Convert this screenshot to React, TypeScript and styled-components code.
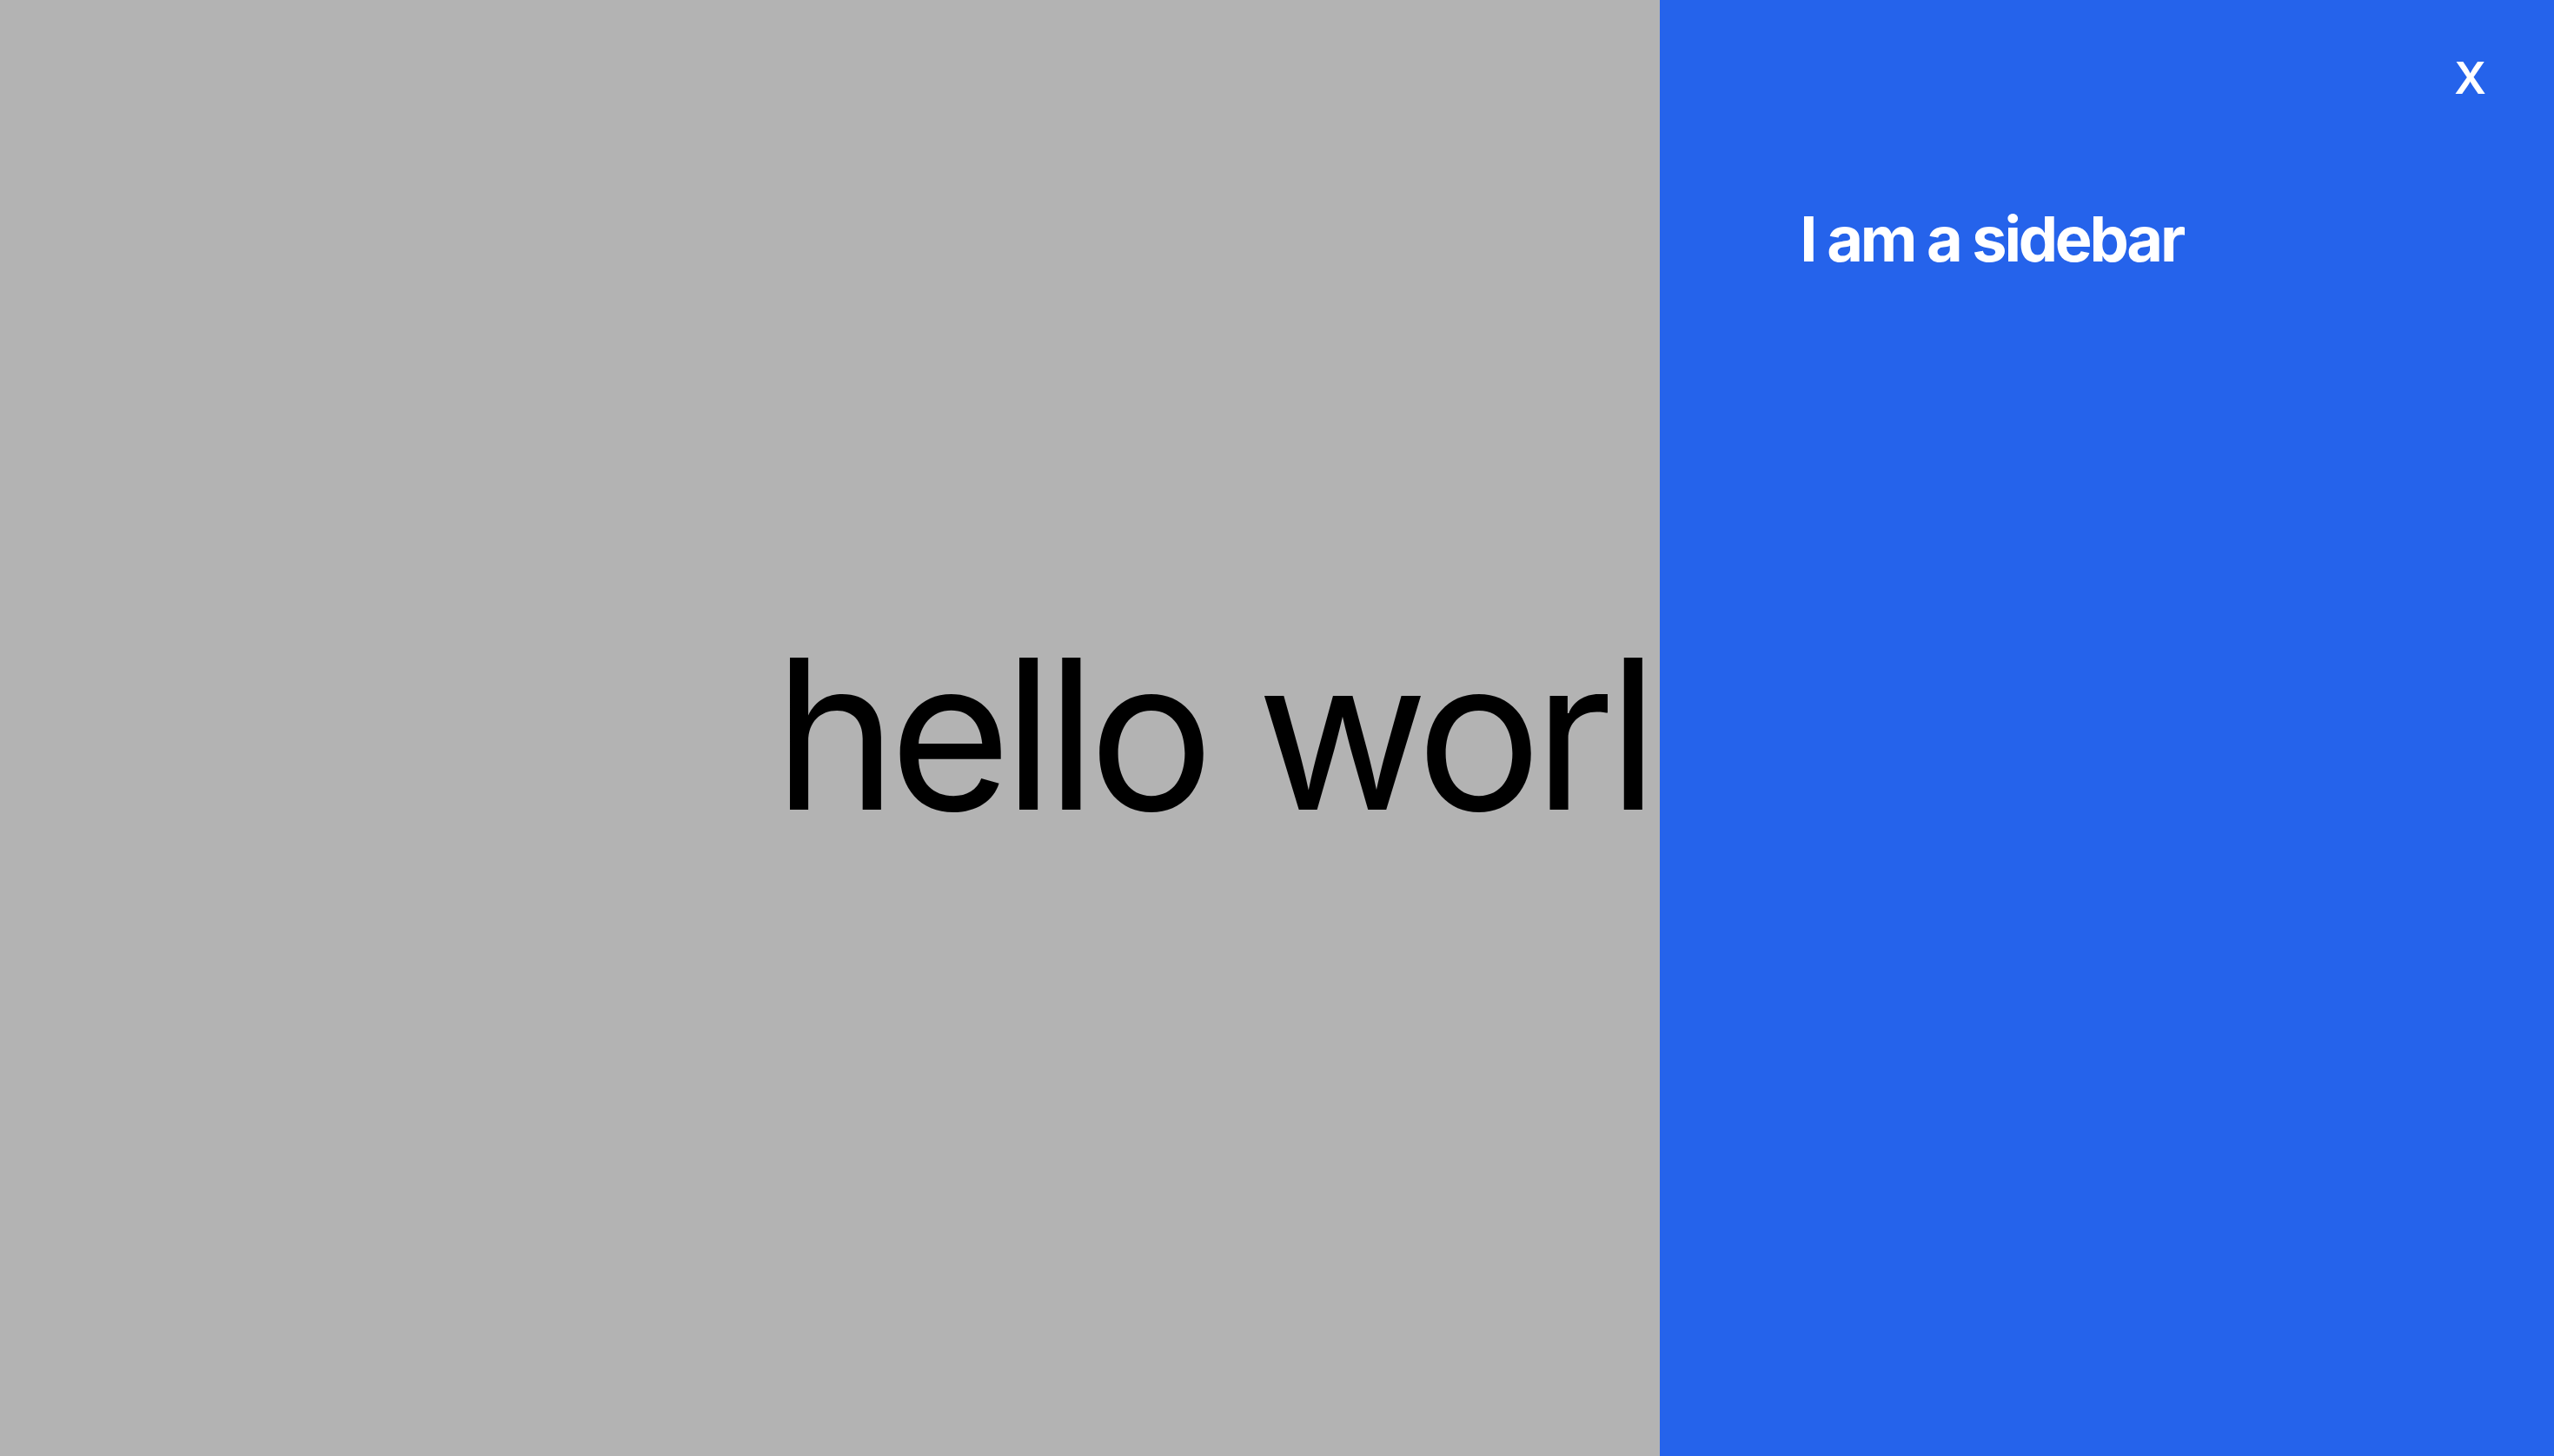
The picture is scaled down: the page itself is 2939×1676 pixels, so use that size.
import { FC } from "react";
import styled, { createGlobalStyle } from "styled-components";

const GlobalStyle = createGlobalStyle`
  html, body {
    margin: 0;
    padding: 0;
    height: 100%;
  }
  body {
    font-family: Inter, "Liberation Sans", sans-serif;
  }
  #root {
    height: 100%;
  }
`;

const Page = styled.main`
  display: flex;
  align-items: center;
  justify-content: center;
  width: 100vw;
  height: 100vh;
  background-color: #b3b3b3;
  overflow: hidden;
`;

const Title = styled.h1`
  margin: 12px 11px 0 0;
  font-size: 240px;
  font-weight: 400;
  letter-spacing: -0.037em;
  color: #000;
`;

const Sidebar = styled.aside`
  position: fixed;
  top: 0;
  right: 0;
  display: flex;
  flex-direction: column;
  width: 35%;
  height: 100vh;
  box-sizing: border-box;
  padding: 64px 78px 64px 80px;
  background-color: #2563eb;
  color: #fff;
`;

const SidebarHeader = styled.div`
  display: flex;
  justify-content: flex-end;
`;

const CloseButton = styled.button`
  padding: 0;
  border: none;
  background: none;
  color: #fff;
  font-family: Inter, "Liberation Sans", sans-serif;
  font-size: 51px;
  font-weight: 600;
  line-height: 1;
  cursor: pointer;
`;

const SidebarTitle = styled.h2`
  margin: 124px 0 0 81px;
  font-size: 72px;
  font-weight: 700;
  letter-spacing: -0.045em;
  line-height: 1;
`;

const App: FC = () => {
  return (
    <>
      <GlobalStyle />
      <Page>
        <Title>hello world</Title>
      </Page>
      <Sidebar>
        <SidebarHeader>
          <CloseButton>X</CloseButton>
        </SidebarHeader>
        <SidebarTitle>I am a sidebar</SidebarTitle>
      </Sidebar>
    </>
  );
};

export default App;
